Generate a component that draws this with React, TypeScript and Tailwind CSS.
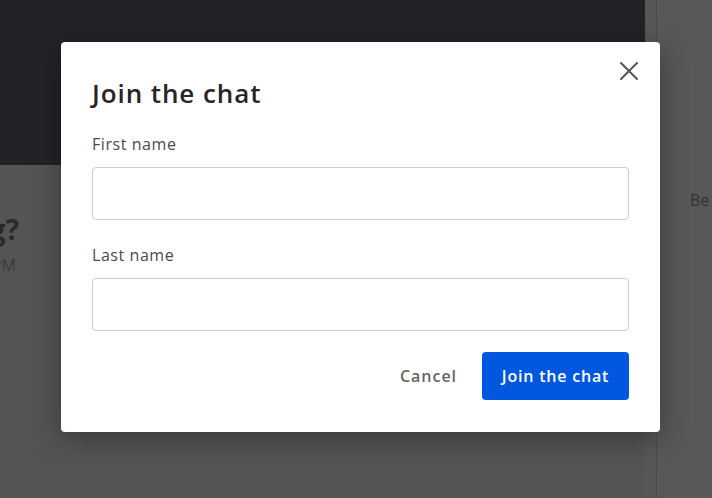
import React from "react";

export default function App() {
  return (
    <div
      className="relative w-[712px] h-[498px] overflow-hidden flex bg-[#555555]"
      style={{ fontFamily: "'Open Sans', 'Noto Sans', sans-serif" }}
    >
      {/* Left main column */}
      <div className="w-[645px] flex flex-col shrink-0">
        <div className="h-[165px] bg-[#222327]" />
        <div className="flex-1 bg-[#545454] pt-[46px]">
          <div className="w-[19px] flex justify-end whitespace-nowrap text-[28px] leading-[36px] font-bold text-[#2a2a2c]">
            Anything to report today. What's happening?
          </div>
          <div className="w-[16px] flex justify-end whitespace-nowrap mt-[8px] text-[16px] leading-[20px] text-[#3a3a3a]">
            Today at 12:00 PM
          </div>
        </div>
      </div>
      {/* Right panel */}
      <div className="w-[11px] bg-[#575757] shrink-0" />
      <div className="flex-1 bg-[#585858] border-l border-[#4c4c4c] pt-[188px] pl-[33px] whitespace-nowrap text-[16px] leading-[24px] text-[#333333]">
        Be the first to post
      </div>

      {/* Modal */}
      <div className="absolute left-[61px] top-[42px] w-[599px] bg-white rounded-[4px] shadow-[0_6px_28px_rgba(0,0,0,0.35)] px-[31px] pt-[35px] pb-[32px]">
        <button className="absolute top-[20px] right-[22px] w-[18px] h-[18px] text-[#555555]" aria-label="Close">
          <svg width="18" height="18" viewBox="0 0 18 18" fill="none" stroke="currentColor" strokeWidth="2" strokeLinecap="round">
            <path d="M1 1L17 17M17 1L1 17" />
          </svg>
        </button>
        <h2 className="text-[26px] leading-[32px] font-semibold text-[#262626] tracking-[0.035em]">Join the chat</h2>
        <label className="block mt-[23px] text-[16px] leading-[24px] text-[#4a4a4a] tracking-[0.035em]">First name</label>
        <input className="block mt-[11px] w-full h-[53px] border border-[#cccccc] rounded-[4px] outline-none px-3" />
        <label className="block mt-[23px] text-[16px] leading-[24px] text-[#4a4a4a] tracking-[0.035em]">Last name</label>
        <input className="block mt-[11px] w-full h-[53px] border border-[#cccccc] rounded-[4px] outline-none px-3" />
        <div className="mt-[21px] flex justify-end items-center">
          <button className="mr-[25px] text-[16px] font-semibold text-[#666666] tracking-[0.06em]">Cancel</button>
          <button className="w-[147px] h-[48px] rounded-[4px] bg-[#0058e1] text-white text-[16px] font-semibold tracking-[0.05em]">
            Join the chat
          </button>
        </div>
      </div>
    </div>
  );
}
